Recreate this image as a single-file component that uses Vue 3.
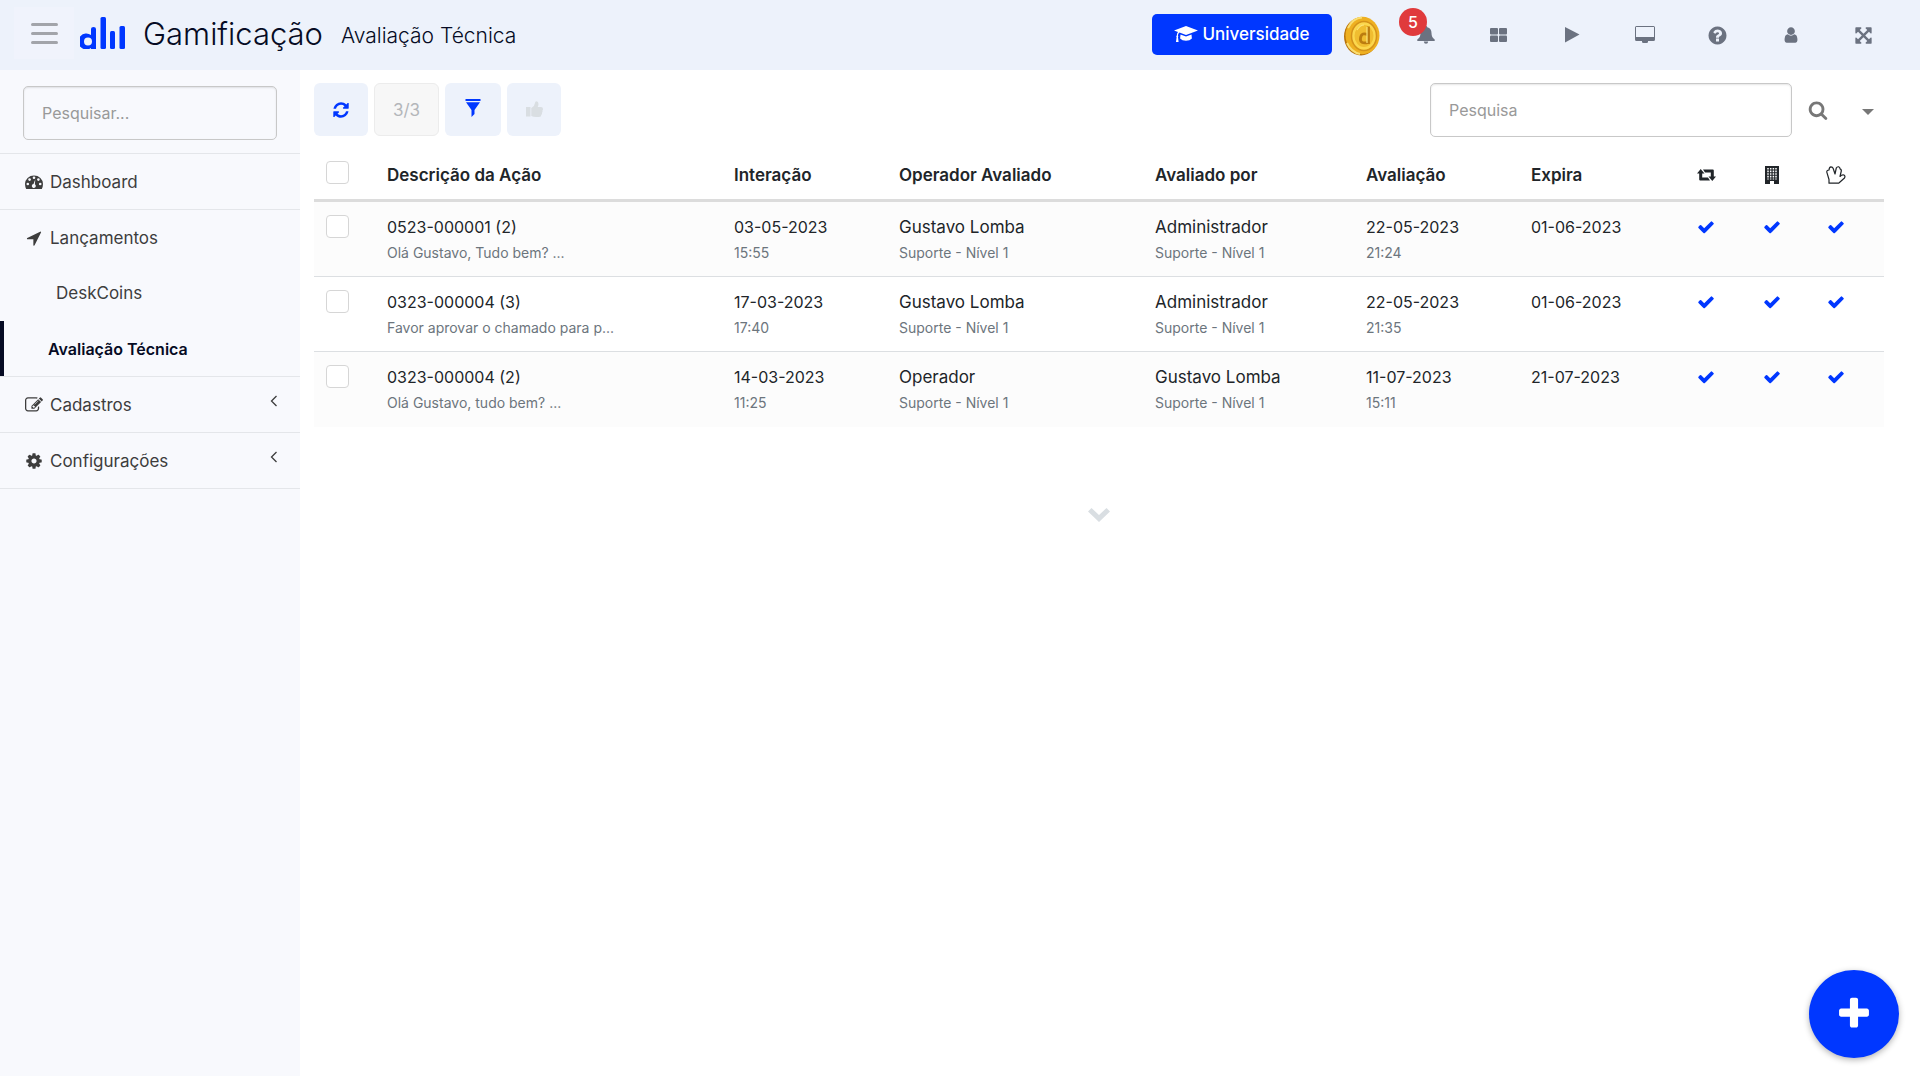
<script setup>
import { ref } from 'vue'

const menuSearch = ref('')
const search = ref('')

const iconPaths = {
  refresh: 'M1639 1056q0 5-1 7-64 268-268 434.5t-478 166.5q-146 0-282.5-55t-243.5-157l-129 129q-19 19-45 19t-45-19-19-45v-448q0-26 19-45t45-19h448q26 0 45 19t19 45-19 45l-137 137q71 66 161 102t187 36q134 0 250-65t186-179q11-17 53-117 8-23 30-23h192q13 0 22.5 9.5t9.5 22.5zm25-800v448q0 26-19 45t-45 19h-448q-26 0-45-19t-19-45 19-45l138-138q-148-137-349-137-134 0-250 65t-186 179q-11 17-53 117-8 23-30 23h-199q-13 0-22.5-9.5t-9.5-22.5v-7q65-268 270-434.5t480-166.5q146 0 284 55.5t245 156.5l130-129q19-19 45-19t45 19 19 45z',
  search: 'M1216 832q0-185-131.5-316.5t-316.5-131.5-316.5 131.5-131.5 316.5 131.5 316.5 316.5 131.5 316.5-131.5 131.5-316.5zm512 832q0 52-38 90t-90 38q-54 0-90-38l-343-342q-179 124-399 124-143 0-273.5-55.5t-225-150-150-225-55.5-273.5 55.5-273.5 150-225 225-150 273.5-55.5 273.5 55.5 225 150 150 225 55.5 273.5q0 220-124 399l343 343q37 37 37 90z',
  plus: 'M1600 736v192q0 40-28 68t-68 28h-416v416q0 40-28 68t-68 28h-192q-40 0-68-28t-28-68v-416h-416q-40 0-68-28t-28-68v-192q0-40 28-68t68-28h416v-416q0-40 28-68t68-28h192q40 0 68 28t28 68v416h416q40 0 68 28t28 68z',
  check: 'M1671 566q0 40-28 68l-724 724-136 136q-28 28-68 28t-68-28l-136-136-362-362q-28-28-28-68t28-68l136-136q28-28 68-28t68 28l294 295 656-657q28-28 68-28t68 28l136 136q28 28 28 68z',
  cog: 'M1152 896q0-106-75-181t-181-75-181 75-75 181 75 181 181 75 181-75 75-181zm512-109v222q0 12-8 23t-20 13l-185 28q-19 54-39 91 35 50 107 138 10 12 10 25t-9 23q-27 37-99 108t-94 71q-12 0-26-9l-138-108q-44 23-91 38-16 136-29 186-7 28-36 28h-222q-14 0-24.5-8.5t-11.5-21.5l-28-184q-49-16-90-37l-141 107q-10 9-25 9-14 0-25-11-126-114-165-168-7-10-7-23 0-12 8-23 15-21 51-66.5t54-70.5q-27-50-41-99l-183-27q-13-2-21-12.5t-8-23.5v-222q0-12 8-23t19-13l186-28q14-46 39-92-40-57-107-138-10-12-10-24 0-10 9-23 26-36 98.5-107.5t94.5-71.5q13 0 26 10l138 107q44-23 91-38 16-136 29-186 7-28 36-28h222q14 0 24.5 8.5t11.5 21.5l28 184q49 16 90 37l142-107q9-9 24-9 13 0 25 10 129 119 165 170 7 8 7 22 0 12-8 23-15 21-51 66.5t-54 70.5q26 50 41 98l183 28q13 2 21 12.5t8 23.5z',
  user: 'M1536 1399q0 109-62.5 187t-150.5 78h-854q-88 0-150.5-78t-62.5-187q0-85 8.5-160.5t31.5-152 58.5-131 94-89 134.5-34.5q131 128 313 128t313-128q76 0 134.5 34.5t94 89 58.5 131 31.5 152 8.5 160.5zm-256-887q0 159-112.5 271.5t-271.5 112.5-271.5-112.5-112.5-271.5 112.5-271.5 271.5-112.5 271.5 112.5 112.5 271.5z',
  help: 'M1024 1376v-192q0-14-9-23t-23-9h-192q-14 0-23 9t-9 23v192q0 14 9 23t23 9h192q14 0 23-9t9-23zm256-672q0-88-55.5-163t-138.5-116-170-41q-243 0-371 213-15 24 8 42l132 100q7 6 19 6 16 0 25-12 53-68 86-92 34-24 86-24 48 0 85.5 26t37.5 59q0 38-20 61t-68 45q-63 28-115.5 86.5t-52.5 125.5v36q0 14 9 23t23 9h192q14 0 23-9t9-23q0-19 21.5-49.5t54.5-49.5q32-18 49-28.5t46-35 44.5-48 28-60.5 12.5-81zm384 192q0 209-103 385.5t-279.5 279.5-385.5 103-385.5-103-279.5-279.5-103-385.5 103-385.5 279.5-279.5 385.5-103 385.5 103 279.5 279.5 103 385.5z',
  expand: 'M1411 541l-355 355 355 355 144-144q29-31 70-14 39 17 39 59v448q0 26-19 45t-45 19h-448q-42 0-59-40-17-39 14-69l144-144-355-355-355 355 144 144q31 30 14 69-17 40-59 40h-448q-26 0-45-19t-19-45v-448q0-42 40-59 39-17 69 14l144 144 355-355-355-355-144 144q-19 19-45 19-12 0-24-5-40-17-40-59v-448q0-26 19-45t45-19h448q42 0 59 40 17 39-14 69l-144 144 355 355 355-355-144-144q-31-30-14-69 17-40 59-40h448q26 0 45 19t19 45v448q0 42-39 59-13 5-25 5-26 0-45-19z',
  arrow: 'M1593 349l-640 1280q-17 35-57 35-5 0-15-2-22-5-35.5-22.5t-13.5-39.5v-576h-576q-22 0-39.5-13.5t-22.5-35.5 4-42 29-30l1280-640q13-7 29-7 27 0 45 19 15 14 18.5 34.5t-6.5 39.5z',
  edit: 'M888 1184l116-116-152-152-116 116v56h96v96h56zm440-720q-16-16-33 1l-350 350q-17 17-1 33t33-1l350-350q17-17 1-33zm80 594v190q0 119-84.5 203.5t-203.5 84.5h-832q-119 0-203.5-84.5t-84.5-203.5v-832q0-119 84.5-203.5t203.5-84.5h832q63 0 117 25 15 7 18 23 3 17-9 29l-49 49q-14 14-32 8-23-6-45-6h-832q-66 0-113 47t-47 113v832q0 66 47 113t113 47h832q66 0 113-47t47-113v-126q0-13 9-22l64-64q15-15 35-7t20 29zm-96-738l288 288-672 672h-288v-288zm444 132l-92 92-288-288 92-92q28-28 68-28t68 28l152 152q28 28 28 68t-28 68z',
}

const rows = [
  { code: '0523-000001 (2)', note: 'Olá Gustavo, Tudo bem? ...', date: '03-05-2023', time: '15:55', rated: 'Gustavo Lomba', ratedTeam: 'Suporte - Nível 1', by: 'Administrador', byTeam: 'Suporte - Nível 1', evalDate: '22-05-2023', evalTime: '21:24', expires: '01-06-2023' },
  { code: '0323-000004 (3)', note: 'Favor aprovar o chamado para p...', date: '17-03-2023', time: '17:40', rated: 'Gustavo Lomba', ratedTeam: 'Suporte - Nível 1', by: 'Administrador', byTeam: 'Suporte - Nível 1', evalDate: '22-05-2023', evalTime: '21:35', expires: '01-06-2023' },
  { code: '0323-000004 (2)', note: 'Olá Gustavo, tudo bem? ...', date: '14-03-2023', time: '11:25', rated: 'Operador', ratedTeam: 'Suporte - Nível 1', by: 'Gustavo Lomba', byTeam: 'Suporte - Nível 1', evalDate: '11-07-2023', evalTime: '15:11', expires: '21-07-2023' },
]
</script>

<template>
  <div class="app">
    <header class="topbar">
      <button class="menu-toggle" type="button" aria-label="Menu">
        <span></span><span></span><span></span>
      </button>
      <a class="logo" href="#" aria-label="Início">
        <svg width="46" height="32" viewBox="0 0 46 32" fill="#0037ff">
          <path fill-rule="evenodd" d="M11 12q0-2 2.500-2t2.500 2v20h-5v-1a8 8 0 1 1 0-13zM8 20.500a4 4 0 1 0 0 8a4 4 0 0 0 0-8z" />
          <rect x="20.500" y="0" width="5.500" height="32" rx="1.500" />
          <rect x="30" y="14" width="5" height="18" rx="1.500" />
          <rect x="39.500" y="9" width="5.500" height="23" rx="1.500" />
        </svg>
      </a>
      <h1 class="title">Gamificação</h1>
      <span class="subtitle">Avaliação Técnica</span>

      <nav class="tools">
        <a class="university" href="#">
          <svg width="24" height="17" viewBox="0 0 24 17" fill="#fff">
            <path d="M12 0 24 4.500 12 9 5.500 6.600q-1.500.8-1.600 3 .8.600.1 1.700L4.600 16H2l.6-4.700q-.8-1 .2-1.800 0-2.200 1.200-3.400L0 4.500z" />
            <path d="M6.500 8.400 12 10.500l5.500-2.100.4 4q-2 2.400-5.900 2.400T6.100 12.400z" />
          </svg>
          <span>Universidade</span>
        </a>
        <button class="coin" type="button" aria-label="DeskCoins">
          <svg width="36" height="40" viewBox="0 0 36 40">
            <ellipse cx="17" cy="20.500" rx="17" ry="19" fill="#b8740c" />
            <ellipse cx="18.500" cy="19.500" rx="17" ry="18.800" fill="#eeb021" />
            <path d="M4 12Q9 2 18 1.500M3 27q4 9 13 11" stroke="#f9de72" stroke-width="2" fill="none" />
            <ellipse cx="20" cy="20" rx="12.500" ry="14.500" fill="#fbd74e" stroke="#d4921a" stroke-width="1.500" />
            <ellipse cx="20" cy="20" rx="9.500" ry="11" fill="#f0bd30" />
            <path d="M24.500 10.500v17.500M24.500 19q-7-3.500-8 3t8 4.500" stroke="#bb7c10" stroke-width="2.800" fill="none" />
            <path d="M23 11v16M13 14q3-5 7-5" stroke="#fbe57a" stroke-width="1.200" fill="none" />
          </svg>
        </button>
        <button class="tool bell" type="button" aria-label="Notificações">
          <svg width="18" height="18" viewBox="0 0 18 18" fill="#6b7280">
            <path d="M9 0q1.200 0 1.300 1.200Q14.500 2.300 14.500 7q0 4.500 3.200 6.500V15H.3v-1.500Q3.500 11.500 3.500 7q0-4.700 4.200-5.800Q7.800 0 9 0zM6.800 15.500h4.400Q11 17.800 9 17.800T6.800 15.500z" />
          </svg>
          <span class="badge">5</span>
        </button>
        <button class="tool" type="button" aria-label="Painéis">
          <svg width="18" height="16" viewBox="0 0 18 16" fill="#6b7280">
            <rect x="0" y="1" width="8" height="6.500" rx="1" /><rect x="9" y="1" width="8" height="6.500" rx="1" />
            <rect x="0" y="8.500" width="8" height="6.500" rx="1" /><rect x="9" y="8.500" width="8" height="6.500" rx="1" />
          </svg>
        </button>
        <button class="tool" type="button" aria-label="Iniciar">
          <svg width="16" height="16" viewBox="0 0 16 16" fill="#6b7280"><path d="M1 0 15.500 7.500 1 15.500z" /></svg>
        </button>
        <button class="tool" type="button" aria-label="Monitor">
          <svg width="20" height="18" viewBox="0 0 20 18">
            <path fill="#6b7280" fill-rule="evenodd" d="M1.500 0h17Q20 0 20 1.500v12q0 1.500-1.500 1.500H13v1q0 1-1.500 1h-3Q7 17 7 16v-1H1.500Q0 15 0 13.500v-12Q0 0 1.500 0zM1 1v10h18V1z" />
          </svg>
        </button>
        <button class="tool" type="button" aria-label="Ajuda">
          <svg width="21" height="21" viewBox="0 0 1792 1792" fill="#6b7280"><path :d="iconPaths.help" /></svg>
        </button>
        <button class="tool" type="button" aria-label="Usuário">
          <svg width="18" height="18" viewBox="0 0 1792 1792" fill="#6b7280"><path :d="iconPaths.user" /></svg>
        </button>
        <button class="tool" type="button" aria-label="Tela cheia">
          <svg width="19" height="19" viewBox="0 0 1792 1792" fill="#6b7280"><path :d="iconPaths.expand" /></svg>
        </button>
      </nav>
    </header>

    <div class="body">
      <aside class="sidebar">
        <div class="side-search">
          <input v-model="menuSearch" class="field" type="text" placeholder="Pesquisar..." aria-label="Pesquisar no menu" />
        </div>
        <ul class="menu">
          <li class="group">
            <a class="item" href="#">
              <svg width="18" height="18" viewBox="0 0 18 18">
                <path fill="#3d3d3d" d="M0 11a9 8.500 0 0 1 18 0q0 2.500-1.200 5H1.200Q0 13.500 0 11z" />
                <g fill="#f8f9fd"><circle cx="2.800" cy="11" r="1.300" /><circle cx="4.600" cy="6.600" r="1.300" /><circle cx="9" cy="4.800" r="1.300" /><circle cx="13.400" cy="6.600" r="1.300" /><circle cx="15.200" cy="11" r="1.300" /><path d="M10.300 6.300 9.900 11.300a2 2 0 1 1-1.400-.3z" /></g>
              </svg>
              <span>Dashboard</span>
            </a>
          </li>
          <li class="group">
            <a class="item" href="#">
              <svg width="18" height="18" viewBox="0 0 1792 1792" fill="#3d3d3d"><path :d="iconPaths.arrow" /></svg>
              <span>Lançamentos</span>
            </a>
            <ul class="submenu">
              <li><a class="subitem" href="#">DeskCoins</a></li>
              <li><a class="subitem current" href="#">Avaliação Técnica</a></li>
            </ul>
          </li>
          <li class="group">
            <a class="item" href="#">
              <svg width="18" height="18" viewBox="0 0 1792 1792" fill="#3d3d3d"><path :d="iconPaths.edit" /></svg>
              <span>Cadastros</span>
              <svg class="chevron" width="8" height="12" viewBox="0 0 8 12" fill="none" stroke="#3d3d3d" stroke-width="1.300"><path d="M6.500 1 1.500 6l5 5" /></svg>
            </a>
          </li>
          <li class="group">
            <a class="item" href="#">
              <svg width="18" height="18" viewBox="0 0 1792 1792" fill="#3d3d3d"><path :d="iconPaths.cog" /></svg>
              <span>Configurações</span>
              <svg class="chevron" width="8" height="12" viewBox="0 0 8 12" fill="none" stroke="#3d3d3d" stroke-width="1.300"><path d="M6.500 1 1.500 6l5 5" /></svg>
            </a>
          </li>
        </ul>
      </aside>

      <main class="content">
        <div class="toolbar">
          <button class="action" type="button" aria-label="Atualizar">
            <svg width="18" height="18" viewBox="0 0 1792 1792" fill="#0037ff"><path :d="iconPaths.refresh" /></svg>
          </button>
          <button class="action count" type="button" disabled>3/3</button>
          <button class="action filter" type="button" aria-label="Filtrar">
            <svg width="16" height="18" viewBox="0 0 16 18" fill="#0037ff"><path d="M.5 0h15v2H.5zM1 3.200h14L9.500 11v4l-3 3v-7z" /></svg>
          </button>
          <button class="action" type="button" aria-label="Aprovar" disabled>
            <svg width="17" height="17" viewBox="0 0 17 17" fill="#d9dee2"><path d="M0 6h4.500v9.500H0zM5.300 7Q9 4.500 9 2 9 .3 10.500.3 12.500.3 12.500 3q0 1.500-.8 3H15q2 0 2 2 0 1-.6 1.500.5 1.300-.4 2.200.3 1.300-.6 2 0 2.300-2.400 2.300h-3Q7.500 16 5.300 15z" /></svg>
          </button>

          <form class="search" role="search" @submit.prevent>
            <input v-model="search" class="field" type="text" placeholder="Pesquisa" aria-label="Pesquisa" />
            <button class="plain" type="submit" aria-label="Buscar">
              <svg width="20" height="20" viewBox="0 0 1792 1792" fill="#777"><path :d="iconPaths.search" /></svg>
            </button>
            <button class="plain caret" type="button" aria-label="Mais opções">
              <svg width="12" height="6" viewBox="0 0 12 6" fill="#777"><path d="M0 0h12L6 6z" /></svg>
            </button>
          </form>
        </div>

        <table class="grid">
          <colgroup>
            <col class="c-check" /><col /><col class="c-date" /><col class="c-rated" /><col class="c-by" />
            <col class="c-date" /><col class="c-expires" /><col class="c-flag" /><col class="c-flag" /><col class="c-last" />
          </colgroup>
          <thead>
            <tr>
              <th><input class="tick" type="checkbox" aria-label="Selecionar todos" /></th>
              <th>Descrição da Ação</th>
              <th>Interação</th>
              <th>Operador Avaliado</th>
              <th>Avaliado por</th>
              <th>Avaliação</th>
              <th>Expira</th>
              <th class="flag">
                <svg width="19" height="18" viewBox="0 -3 19 18" fill="#212529"><path d="M3.700 0 7.500 4.500H5.200V8.500H11l2 3H3.200Q2.200 11.500 2.200 10.500V4.500H0zM15.300 12 11.500 7.500H13.800V3.500H8L6 .5H15.800Q16.800.5 16.800 1.500V7.500H19z" /></svg>
              </th>
              <th class="flag">
                <svg width="14" height="18" viewBox="0 0 14 18">
                  <path d="M0 0h14v18H0z" fill="#212529" />
                  <path d="M3 2v11.500M5.700 2v11.500M8.400 2v11.500M11 2v11.500" stroke="#fff" stroke-width="1.500" stroke-dasharray="1.600 1" />
                  <path d="M5 15h4v3H5z" fill="#fff" />
                </svg>
              </th>
              <th class="flag last">
                <svg width="20" height="18" viewBox="0 0 20 18" fill="none" stroke="#212529" stroke-width="1.200" stroke-linejoin="round" stroke-linecap="round"><path d="M3 17.200V13.500L.8 6.200Q.6 4 3 4 3.200 1 5 .8 6.600.8 7.200 2.500L9 8 10.300 2Q11 .5 12.700.8 14 1.200 14 2.800 15.600 3.200 15.300 5L14 10.500Q16 8.300 18 9 19.600 10 18.500 12L14 16l-1.200 1.200z" /></svg>
              </th>
            </tr>
          </thead>
          <tbody>
            <tr v-for="row in rows" :key="row.code">
              <td><input class="tick" type="checkbox" :aria-label="'Selecionar ' + row.code" /></td>
              <td>{{ row.code }}<small>{{ row.note }}</small></td>
              <td>{{ row.date }}<small>{{ row.time }}</small></td>
              <td class="person">{{ row.rated }}<small>{{ row.ratedTeam }}</small></td>
              <td class="person">{{ row.by }}<small>{{ row.byTeam }}</small></td>
              <td>{{ row.evalDate }}<small>{{ row.evalTime }}</small></td>
              <td>{{ row.expires }}</td>
              <td v-for="n in 3" :key="n" class="flag" :class="{ last: n === 3 }">
                <svg width="18" height="18" viewBox="0 0 1792 1792" fill="#0037ff"><path :d="iconPaths.check" /></svg>
              </td>
            </tr>
          </tbody>
        </table>

        <button class="more" type="button" aria-label="Carregar mais">
          <svg width="22" height="14" viewBox="0 0 22 14" fill="#d9dee2"><path d="M0 3.500 3.500 0 11 7l7.500-7L22 3.500 11 14z" /></svg>
        </button>
      </main>
    </div>

    <button class="fab" type="button" aria-label="Adicionar">
      <svg width="38" height="38" viewBox="0 0 1792 1792" fill="#fff"><path :d="iconPaths.plus" /></svg>
    </button>
  </div>
</template>

<style>
body {
  background: #fff;
}
</style>

<style scoped>
.app {
  display: flex;
  flex-direction: column;
  min-height: 100vh;
  box-sizing: border-box;
  padding-bottom: 4px;
  font-family: Inter, "Noto Sans", sans-serif;
  font-size: 16px;
  line-height: 24px;
  color: #212529;
}
.app * {
  box-sizing: border-box;
}
svg {
  display: block;
  flex: none;
}
button {
  padding: 0;
  border: 0;
  background: none;
  font: inherit;
  color: inherit;
}
a {
  color: inherit;
  text-decoration: none;
}
.topbar {
  display: flex;
  align-items: center;
  height: 70px;
  padding: 0 20px 0 14px;
  background: #edf2fb;
  color: #060b24;
}
.menu-toggle {
  display: flex;
  flex-direction: column;
  align-items: center;
  justify-content: center;
  gap: 6px;
  width: 60px;
  height: 52px;
  margin: 0 6px 4px 0;
  background: #f0f3fc;
}
.menu-toggle span {
  width: 27px;
  height: 3px;
  border-radius: 2px;
  background: #a2a4aa;
}
.logo {
  margin-bottom: 4px;
}
.title {
  margin: 0 18px 2px 17px;
  font-size: 31px;
  font-weight: 300;
  line-height: 40px;
}
.subtitle {
  padding-top: 2px;
  font-size: 21px;
  font-weight: 300;
  line-height: 28px;
}
.tools {
  display: flex;
  align-items: center;
  margin-left: auto;
}
.university {
  display: flex;
  align-items: center;
  justify-content: center;
  gap: 4px;
  width: 180px;
  height: 41px;
  margin-bottom: 2px;
  border-radius: 5px;
  background: #0037ff;
  color: #fff;
  font-size: 17px;
  font-weight: 500;
}
.coin {
  margin: 2px 9px 0 12px;
}
.tool {
  position: relative;
  display: flex;
  align-items: center;
  justify-content: center;
  width: 73px;
  height: 42px;
}
.badge {
  position: absolute;
  left: 10px;
  top: -6px;
  width: 28px;
  height: 28px;
  border-radius: 50%;
  background: #e03a3c;
  color: #fff;
  font-weight: 500;
  line-height: 28px;
  text-align: center;
}
.body {
  display: flex;
  flex: 1;
}
.sidebar {
  width: 300px;
  flex: none;
  background: #f8f9fd;
}
.side-search {
  padding: 16px 23px 13px;
}
.field {
  display: block;
  width: 100%;
  height: 54px;
  padding: 0 18px;
  border: 1px solid #c8c8c8;
  border-radius: 5px;
  background: transparent;
  box-shadow: inset 0 1px 2px #0000001a;
  font: inherit;
  color: inherit;
}
.field::placeholder {
  color: #999;
  opacity: 1;
}
.menu,
.submenu {
  margin: 0;
  padding: 0;
  list-style: none;
}
.menu {
  border-bottom: 1px solid #e4e6ea;
  font-size: 17px;
}
.group {
  border-top: 1px solid #e4e6ea;
  color: #3d3d3d;
}
.item {
  display: flex;
  align-items: center;
  gap: 7px;
  height: 55px;
  padding: 0 22px 0 25px;
}
.chevron {
  margin: 0 0 8px auto;
}
.subitem {
  display: flex;
  align-items: center;
  height: 56px;
  padding-left: 56px;
}
.current {
  height: 55px;
  padding-left: 44px;
  border-left: 4px solid #060b24;
  color: #060b24;
  font-size: 16px;
  font-weight: 600;
}
.content {
  flex: 1;
  min-width: 0;
  padding: 13px 36px 0 14px;
}
.toolbar {
  display: flex;
  gap: 6px;
}
.action {
  display: flex;
  align-items: center;
  justify-content: center;
  width: 54px;
  height: 53px;
  border-radius: 6px;
  background: #edf2fb;
}
.count {
  width: 65px;
  border: 1px solid #ececec;
  background: #f7f7f7;
  color: #b4b6ba;
  font-size: 17px;
}
.filter {
  width: 56px;
  padding-bottom: 4px;
}
.search {
  display: flex;
  align-items: center;
  width: 454px;
  margin-left: auto;
}
.search .field {
  flex: 1;
  min-width: 0;
}
.plain {
  margin-left: 16px;
}
.caret {
  margin: 4px 10px 0 34px;
}
.grid {
  width: 100%;
  margin-top: 12px;
  border-collapse: separate;
  border-spacing: 0;
  table-layout: fixed;
}
.c-check {
  width: 63px;
}
.c-date {
  width: 165px;
}
.c-rated {
  width: 256px;
}
.c-by {
  width: 211px;
}
.c-expires {
  width: 152px;
}
.c-flag {
  width: 66px;
}
.c-last {
  width: 79px;
}
th,
td {
  padding: 0 10px;
  text-align: left;
  vertical-align: top;
}
th {
  height: 53px;
  padding-top: 14px;
  border-bottom: 3px solid #dcdcdc;
  font-size: 17px;
  font-weight: 600;
}
td {
  height: 75px;
  padding-top: 13px;
  border-bottom: 1px solid #dcdfe2;
}
tbody tr:nth-child(odd) {
  background: #fcfcfc;
}
tbody tr:last-child td {
  border-bottom: 0;
}
.person {
  font-size: 17px;
}
td small {
  display: block;
  padding-top: 3px;
  font-size: 14px;
  line-height: 22px;
  color: #6c757d;
}
.tick {
  display: block;
  width: 23px;
  height: 23px;
  margin: 0 0 0 2px;
  border: 1px solid #d6d6d6;
  border-radius: 4px;
  background: #fff;
  appearance: none;
}
th .tick {
  margin-top: -2px;
}
.flag svg {
  margin: 3px auto 0;
}
.flag.last {
  padding-right: 27px;
}
.more {
  display: block;
  margin: 81px auto 0;
}
.fab {
  position: fixed;
  right: 21px;
  bottom: 22px;
  display: flex;
  align-items: center;
  justify-content: center;
  width: 90px;
  height: 88px;
  border-radius: 50%;
  background: #0037ff;
  box-shadow: 0 2px 6px #0000004d;
}
</style>
